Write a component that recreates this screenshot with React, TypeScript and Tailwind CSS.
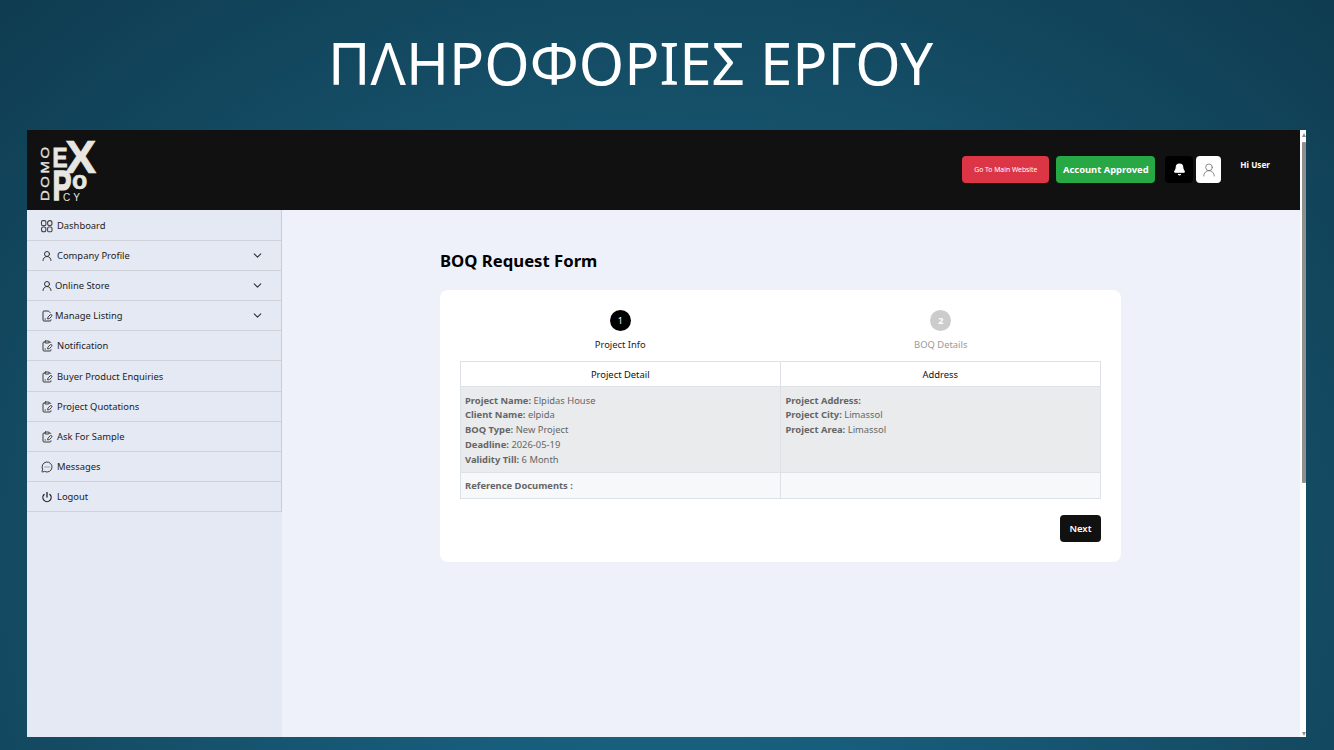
import { ChevronDown, Bell, UserRound, ClipboardPenLine, FilePenLine, MessageCircleMore, Power } from 'lucide-react';

const sidebarItems = [
  { label: 'Dashboard', icon: 'grid', textMl: 'ml-[3px]', row: 'h-[31px] pt-[9px]' },
  { label: 'Company Profile', icon: 'user', textMl: 'ml-[3px]', chevron: true, row: 'h-[30px] pt-[8px]' },
  { label: 'Online Store', icon: 'user', textMl: 'ml-px', chevron: true, row: 'h-[30px] pt-[8px]' },
  { label: 'Manage Listing', icon: 'pen', textMl: 'ml-px', chevron: true, row: 'h-[30px] pt-[8px]' },
  { label: 'Notification', icon: 'clip', textMl: 'ml-[3px]', row: 'h-[30px] pt-[8px]' },
  { label: 'Buyer Product Enquiries', icon: 'clip', textMl: 'ml-[3px]', row: 'h-[31px] pt-[9px]' },
  { label: 'Project Quotations', icon: 'clip', textMl: 'ml-[3px]', row: 'h-[30px] pt-[8px]' },
  { label: 'Ask For Sample', icon: 'clip', textMl: 'ml-[3px]', row: 'h-[30px] pt-[8px]' },
  { label: 'Messages', icon: 'chat', textMl: 'ml-[3px]', row: 'h-[30px] pt-[8px]' },
  { label: 'Logout', icon: 'power', textMl: 'ml-[3px]', row: 'h-[30px] pt-[8px]' },
];

const SideIcon = ({ name }: { name: string }) => {
  const cls = 'w-[14px] h-[14px] p-[1px] text-[#333] shrink-0';
  if (name === 'grid') {
    return (
      <svg viewBox="0 0 14 14" className="w-[14px] h-[14px] text-[#444] shrink-0" fill="none" stroke="currentColor" strokeWidth="1.1">
        <rect x="1.5" y="1.6" width="4.4" height="5" rx="1.4" />
        <rect x="7.6" y="1.6" width="4.4" height="5" rx="2.1" />
        <rect x="1.5" y="8" width="4.4" height="4.8" rx="2" />
        <rect x="7.6" y="8" width="4.4" height="4.8" rx="1.4" />
      </svg>
    );
  }
  if (name === 'user') return <UserRound className={cls} strokeWidth={2} />;
  if (name === 'pen') return <FilePenLine className={cls} strokeWidth={2} />;
  if (name === 'clip') return <ClipboardPenLine className={cls} strokeWidth={1.9} />;
  if (name === 'chat') return <MessageCircleMore className={cls} strokeWidth={1.9} />;
  return <Power className="w-[14px] h-[14px] p-[1.5px] text-[#222] shrink-0" strokeWidth={2.8} />;
};

// wordmark, kept as live svg text
const Logo = () => (
  <svg width="60" height="66" viewBox="0 0 60 66" className="block overflow-visible">
    <g fill="#e8e6e0" stroke="#e8e6e0" fontFamily="'Liberation Sans', sans-serif">
      <text transform="translate(8.5 63) rotate(-90) scale(1.35 1)" fontSize="11" textLength="40" strokeWidth="0.3">DOMO</text>
      <text x="12.5" y="29" fontSize="28" fontWeight="700" textLength="15" lengthAdjust="spacingAndGlyphs" strokeWidth="1">E</text>
      <text x="25" y="35" fontSize="47" fontWeight="700" strokeWidth="0.6">X</text>
      <text x="12.5" y="62" fontSize="43" fontWeight="700" textLength="19" lengthAdjust="spacingAndGlyphs" strokeWidth="1.4">P</text>
      <text x="32" y="51" fontSize="25" fontWeight="700" strokeWidth="0.6">o</text>
      <text x="23" y="63" fontSize="10" letterSpacing="3" strokeWidth="0">CY</text>
    </g>
  </svg>
);

const Sidebar = () => (
  <div className="w-[255px] shrink-0 bg-[#e5e9f4]">
    <div className="border-r border-[#c9ccd3]">
      {sidebarItems.map((item) => (
        <div key={item.label} className={`flex items-start pl-[13px] pr-[17px] border-b border-[#cfd2d9] ${item.row}`}>
          <SideIcon name={item.icon} />
          <span className={`${item.textMl} text-[9.4px] leading-[14px] text-[#222]`}>{item.label}</span>
          {item.chevron && <ChevronDown className="ml-auto w-[13px] h-[13px] text-[#333]" strokeWidth={2} />}
        </div>
      ))}
    </div>
  </div>
);

const Field = ({ label, value }: { label: string; value?: string }) => (
  <p className="h-[14.8px] leading-[15px]">
    <span className="font-bold">{label}</span>
    {value && <span> {value}</span>}
  </p>
);

const App = () => {
  return (
    <div className="relative w-[1334px] h-[750px] overflow-hidden bg-[radial-gradient(ellipse_75%_110%_at_50%_75%,#1a6a8c_0%,#155069_55%,#0e394d_100%)] font-['Noto_Sans','Open_Sans',sans-serif]">
      <h1 className="h-[130px] pl-[328px] pt-[23px] text-[58.2px] leading-[80px] text-white font-normal">
        ΠΛΗΡΟΦΟΡΙΕΣ ΕΡΓΟΥ
      </h1>

      <div className="ml-[27px] w-[1279px] h-[607px] flex bg-[#eef1f9]">
        <div className="flex-1 flex flex-col min-w-0">
          <header className="h-[80px] shrink-0 bg-[#111] flex pl-[13px]">
            <div className="pt-[8px]"><Logo /></div>
            <div className="ml-auto flex items-start pt-[26px] pr-[30px]">
              <button className="w-[87px] h-[27px] rounded-[4px] bg-[#dc3545] text-white text-[6.8px] pt-[2px]">Go To Main Website</button>
              <button className="ml-[7px] w-[99px] h-[27px] rounded-[4px] bg-[#28a745] text-white text-[9.4px] font-bold pt-[2px]">Account Approved</button>
              <span className="ml-[10px] w-[28px] h-[27px] rounded-[4px] bg-black flex items-center justify-center">
                <Bell className="w-[13px] h-[13px] text-white" fill="white" />
              </span>
              <span className="ml-[3px] w-[25px] h-[27px] rounded-[4px] bg-white flex items-center justify-center">
                <UserRound className="w-[16px] h-[16px] text-[#666]" strokeWidth={1.1} />
              </span>
              <span className="ml-[19px] text-white text-[8.2px] font-bold leading-[18px]">Hi User</span>
            </div>
          </header>

          <div className="flex-1 flex min-h-0">
            <Sidebar />
            <main className="flex-1 pl-[158px] pt-[38px]">
              <h2 className="text-[16.7px] leading-[26px] font-bold text-black">BOQ Request Form</h2>
              <div className="mt-[16px] w-[681px] h-[272px] rounded-[8px] bg-white px-[20px] pt-[20px]">
                <div className="flex h-[51px]">
                  <div className="flex-1 flex flex-col items-center">
                    <span className="w-[21px] h-[21px] rounded-full bg-black text-white text-[9px] flex items-center justify-center">1</span>
                    <span className="mt-[7px] text-[9.4px] leading-[14px] text-[#222]">Project Info</span>
                  </div>
                  <div className="flex-1 flex flex-col items-center">
                    <span className="w-[21px] h-[21px] rounded-full bg-[#ccc] text-white text-[9px] font-bold flex items-center justify-center">2</span>
                    <span className="mt-[7px] text-[9.4px] leading-[14px] text-[#999]">BOQ Details</span>
                  </div>
                </div>

                <div className="grid grid-cols-2 border border-[#dee2e6] text-[9.4px] text-[#666]">
                  <div className="h-[25px] pt-[3px] flex items-center justify-center text-[#111] border-r border-b border-[#dee2e6]">Project Detail</div>
                  <div className="h-[25px] pt-[3px] flex items-center justify-center text-[#111] border-b border-[#dee2e6]">Address</div>
                  <div className="h-[86px] bg-[#e9ebed] px-[4px] pt-[5.5px] border-r border-b border-[#dee2e6]">
                    <Field label="Project Name:" value="Elpidas House" />
                    <Field label="Client Name:" value="elpida" />
                    <Field label="BOQ Type:" value="New Project" />
                    <Field label="Deadline:" value="2026-05-19" />
                    <Field label="Validity Till:" value="6 Month" />
                  </div>
                  <div className="h-[86px] bg-[#e9ebed] px-[5px] pt-[5.5px] border-b border-[#dee2e6]">
                    <Field label="Project Address:" />
                    <Field label="Project City:" value="Limassol" />
                    <Field label="Project Area:" value="Limassol" />
                  </div>
                  <div className="h-[25px] pt-[2px] bg-[#f7f8fa] px-[4px] flex items-center font-bold border-r border-[#dee2e6]">Reference Documents :</div>
                  <div className="h-[25px] bg-[#f7f8fa]" />
                </div>

                <div className="flex justify-end mt-[16px]">
                  <button className="w-[41px] h-[27px] rounded-[4px] bg-[#111] text-white text-[9.5px] font-semibold pt-[1px]">Next</button>
                </div>
              </div>
            </main>
          </div>
        </div>

        {/* window scrollbar */}
        <div className="w-[6px] shrink-0 bg-white flex flex-col items-end">
          <div className="mt-[3px] w-0 h-0 border-x-[2px] border-b-[4px] border-x-transparent border-b-[#8f8f8f]" />
          <div className="mt-[5px] w-[4px] h-[341px] rounded-[1px] bg-[#8f8f8f]" />
          <div className="mt-auto mb-[1px] w-0 h-0 border-x-[2px] border-t-[4px] border-x-transparent border-t-[#8f8f8f]" />
        </div>
      </div>
    </div>
  );
};

export default App;
